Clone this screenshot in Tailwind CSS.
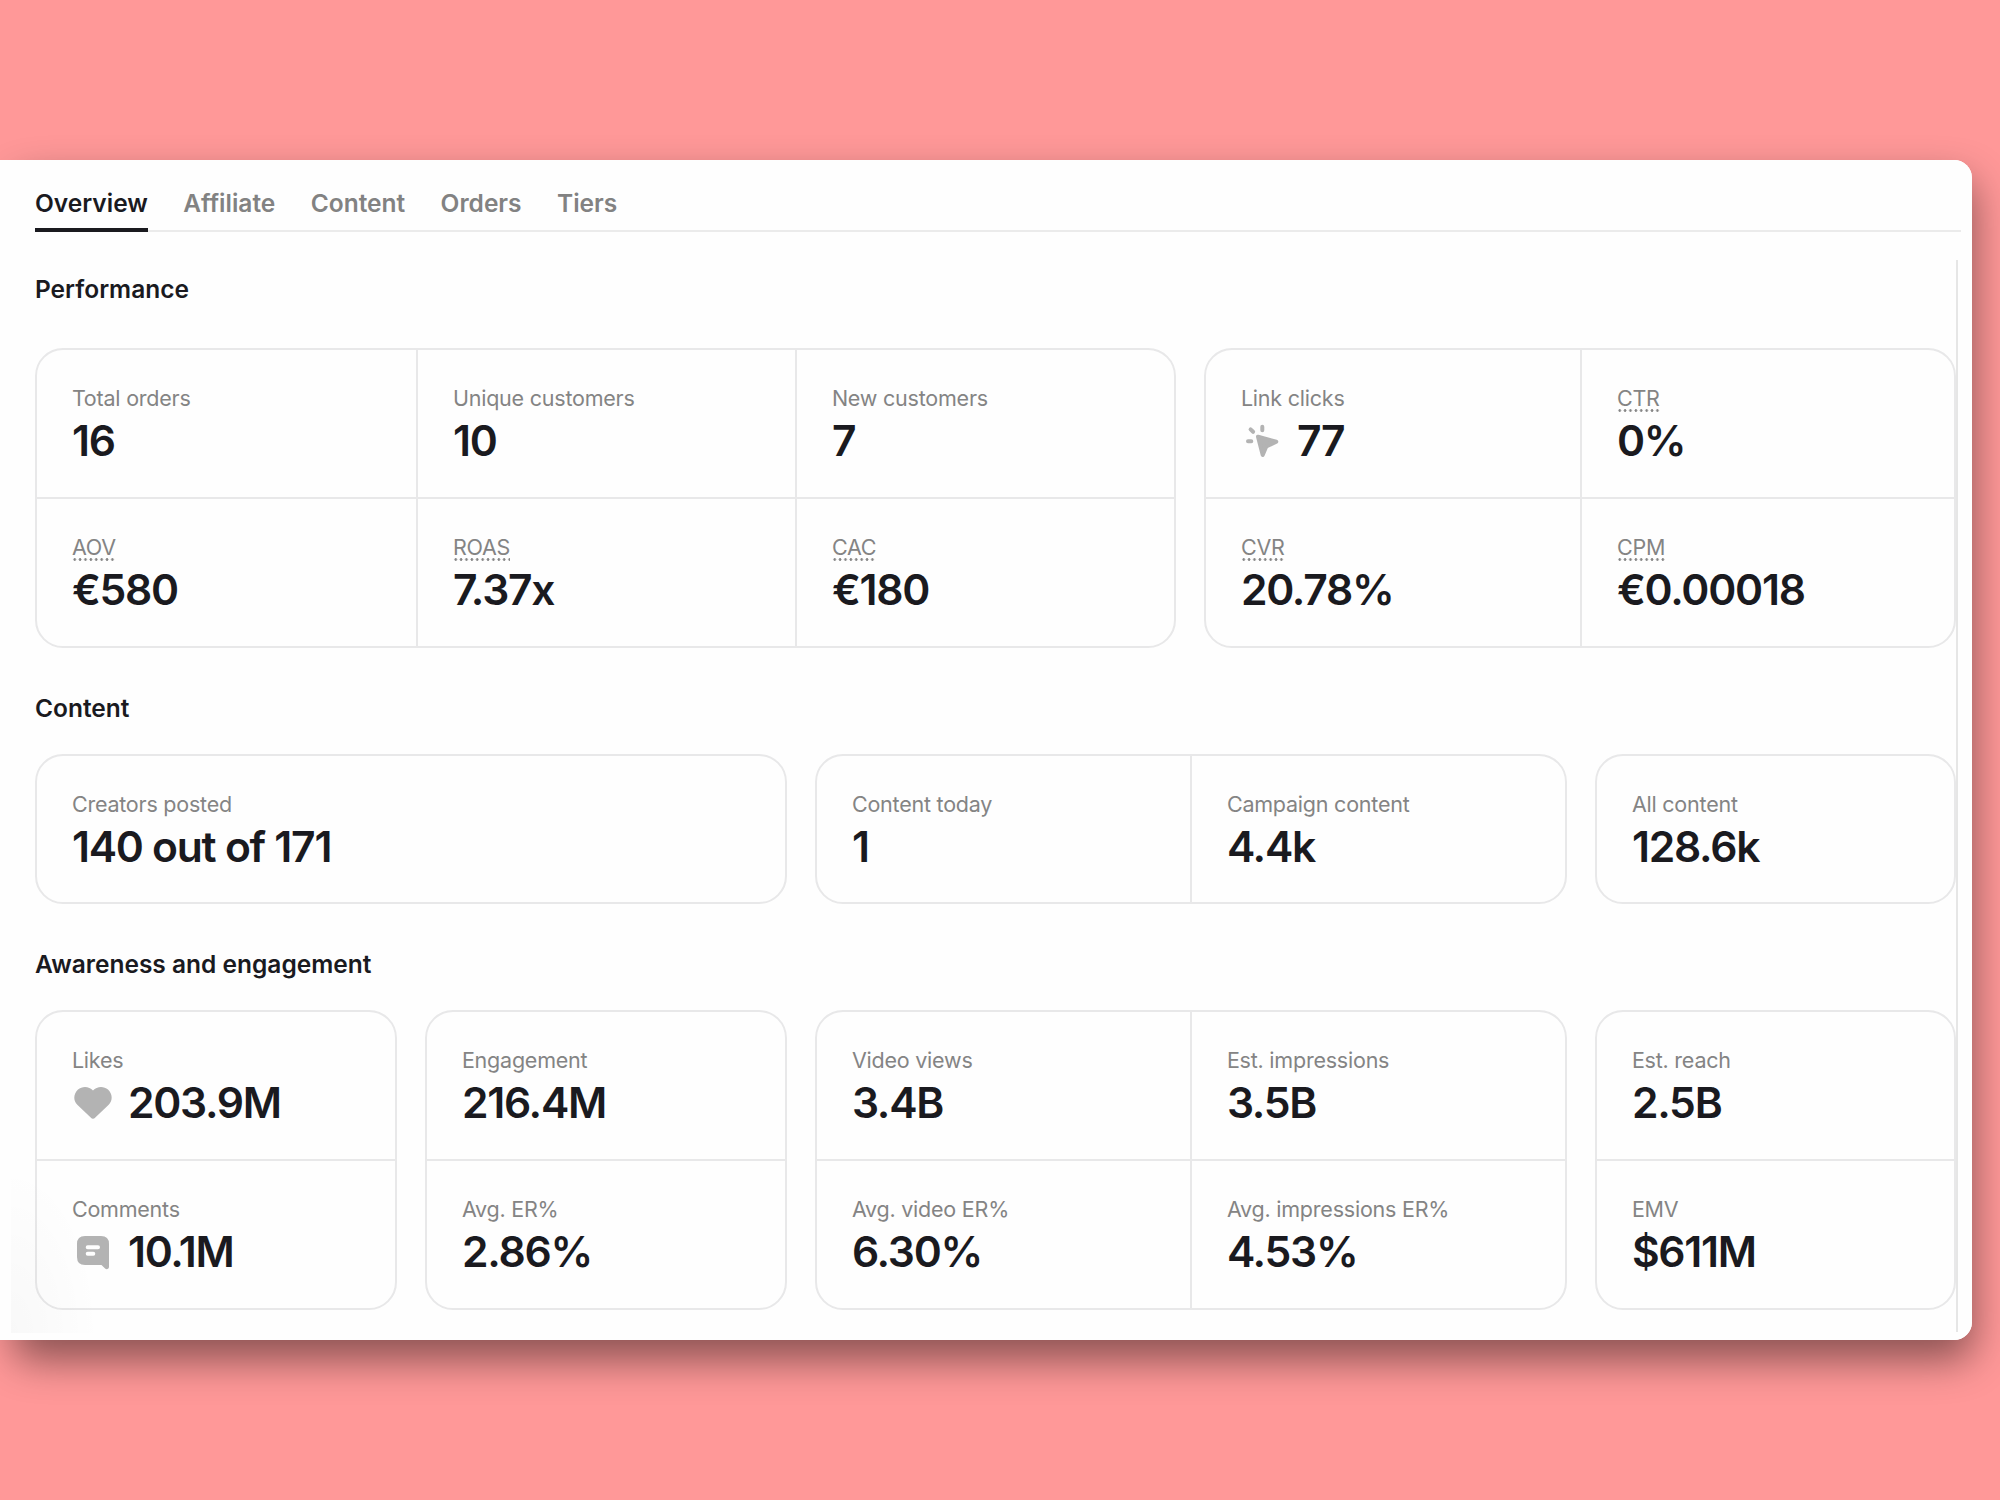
<!DOCTYPE html>
<html lang="en">
<head>
<meta charset="utf-8">
<title>Campaign overview</title>
<script src="https://cdn.jsdelivr.net/npm/@tailwindcss/browser@4"></script>
</head>
<body class="h-[1500px] w-[2000px] overflow-hidden bg-[#ff9898] pt-40 font-[Inter,sans-serif] text-[#1a1a1f]">
<main class="relative isolate flex h-[1180px] w-[1972px] flex-col rounded-r-[18px] bg-[#fefefe] pl-[35px]">
  <div class="absolute inset-y-0 right-0 left-[12px] -z-20 rounded-[18px] shadow-[1px_20px_40px_rgba(0,0,0,0.46)]"></div>
  <div class="absolute inset-0 -z-10 rounded-r-[18px] bg-[#fefefe]"></div>
  <div class="absolute bottom-[7px] left-[11px] h-[170px] w-[90px] bg-[radial-gradient(ellipse_at_bottom_left,rgba(0,0,0,0.022),transparent_70%)]"></div>
  <nav class="mr-[11px] flex h-[72px] shrink-0 gap-[35.4px] border-b-2 border-[#ebebeb] text-[24.500px] leading-8 font-semibold text-[#828282]">
    <a class="h-[72px] border-b-4 border-[#1a1a1f] pt-[27px] text-[#1a1a1f]">Overview</a>
    <a class="pt-[27px]">Affiliate</a>
    <a class="pt-[27px]">Content</a>
    <a class="pt-[27px]">Orders</a>
    <a class="pt-[27px]">Tiers</a>
  </nav>
  <div class="mt-7 mr-[14px] h-[1072px] border-r-2 border-[#e6e6e6]">
    <h2 class="h-[88px] pt-[13px] text-[24.500px] leading-8 font-semibold">Performance</h2>
    <div class="flex w-[1921px] gap-7">
      <section class="grid h-[300px] w-[1141px] grid-cols-[381px_379px_1fr] grid-rows-[149px_1fr] rounded-[28px] border-2 border-[#e8e8e9]" id="orders"></section>
      <section class="grid h-[300px] w-[752px] grid-cols-[376px_1fr] grid-rows-[149px_1fr] rounded-[28px] border-2 border-[#e8e8e9]" id="clicks"></section>
    </div>
    <h2 class="h-[106px] pt-[44px] text-[24.500px] leading-8 font-semibold">Content</h2>
    <div class="flex w-[1921px] gap-7">
      <section class="grid h-[150px] w-[752px] rounded-[28px] border-2 border-[#e8e8e9]" id="creators"></section>
      <section class="grid h-[150px] w-[752px] grid-cols-[375px_1fr] rounded-[28px] border-2 border-[#e8e8e9]" id="posts"></section>
      <section class="grid h-[150px] w-[361px] rounded-[28px] border-2 border-[#e8e8e9]" id="all"></section>
    </div>
    <h2 class="h-[106px] pt-[44px] text-[24.500px] leading-8 font-semibold">Awareness and engagement</h2>
    <div class="flex w-[1921px] gap-7">
      <section class="grid h-[300px] w-[362px] grid-rows-[149px_1fr] rounded-[28px] border-2 border-[#e8e8e9]" id="likes"></section>
      <section class="grid h-[300px] w-[362px] grid-rows-[149px_1fr] rounded-[28px] border-2 border-[#e8e8e9]" id="engagement"></section>
      <section class="grid h-[300px] w-[752px] grid-cols-[375px_1fr] grid-rows-[149px_1fr] rounded-[28px] border-2 border-[#e8e8e9]" id="views"></section>
      <section class="grid h-[300px] w-[361px] grid-rows-[149px_1fr] rounded-[28px] border-2 border-[#e8e8e9]" id="reach"></section>
    </div>
  </div>
</main>
<script>
const icons = {
  click: '<svg class="h-10 w-10" viewBox="0 0 40 40" fill="#b3b3b3" stroke="#b3b3b3" stroke-linecap="round" stroke-linejoin="round" stroke-width="4"><path d="M17 16.700 35.300 21.700 25.300 26.500 21.700 35Z"/><path fill="none" d="M21.300 6.700v3.600M9.600 9.400l2.500 2.400M7 21.300h3.300"/></svg>',
  heart: '<svg class="h-10 w-10 overflow-visible" viewBox="0 0 40 40" fill="#b3b3b3"><path d="M21 8.600C24.800 4 31.800 3.700 36 7.600c4.700 4.400 4.900 11 .7 15.200L23.300 35.600a3.200 3.200 0 0 1-4.600 0L5.300 22.800C1.100 18.600 1.300 12 6 7.600 10.200 3.700 17.200 4 21 8.600Z"/></svg>',
  comment: '<svg class="h-10 w-10" viewBox="0 0 40 40"><path fill="#b3b3b3" d="M13 5h16q8 0 8 8v23a2.200 2.200 0 0 1-3.900 1.400L29.500 34H13q-8 0-8-8V13q0-8 8-8Z"/><path d="M15.700 16.200h10.300M15.700 22.800h5.600" stroke="#fefefe" stroke-width="4" stroke-linecap="round"/></svg>'
};
// Each metric: [label, value, has tooltip, icon]
const cards = {
  orders: [3, [["Total orders","16"],["Unique customers","10"],["New customers","7"],["AOV","€580",1],["ROAS","7.37x",1],["CAC","€180",1]]],
  clicks: [2, [["Link clicks","77",0,"click"],["CTR","0%",1],["CVR","20.78%",1],["CPM","€0.00018",1]]],
  creators: [1, [["Creators posted","140 out of 171"]]],
  posts: [2, [["Content today","1"],["Campaign content","4.4k"]]],
  all: [1, [["All content","128.6k"]]],
  likes: [1, [["Likes","203.9M",0,"heart"],["Comments","10.1M",0,"comment"]]],
  engagement: [1, [["Engagement","216.4M"],["Avg. ER%","2.86%"]]],
  views: [2, [["Video views","3.4B"],["Est. impressions","3.5B"],["Avg. video ER%","6.30%"],["Avg. impressions ER%","4.53%"]]],
  reach: [1, [["Est. reach","2.5B"],["EMV","$611M"]]]
};
for (const [id, [cols, items]] of Object.entries(cards)) {
  document.getElementById(id).innerHTML = items.map(([label, value, tip, icon], i) => {
    const right = i % cols < cols - 1 ? "border-r-2" : "";
    const bottom = i + cols < items.length ? "border-b-2" : "";
    const dots = tip ? "bg-[radial-gradient(circle,#858585_1px,transparent_1.7px)] bg-[length:5.4px_3px] bg-repeat-x bg-bottom-left" : "";
    return `<div class="flex flex-col items-start border-[#e8e8e9] pt-[35px] pl-[34.9px] ${right} ${bottom}">
      <span class="h-[27px] text-[21.5px] leading-[27px] tracking-[-0.22px] text-[#848484] ${dots}">${label}</span>
      <div class="flex h-[52px] items-center gap-4 pt-1 text-[42.6px] leading-[52px] font-semibold tracking-[-1.25px]">${icon ? icons[icon] : ""}<span class="pt-0.5">${value}</span></div>
    </div>`;
  }).join("");
}
</script>
</body>
</html>
